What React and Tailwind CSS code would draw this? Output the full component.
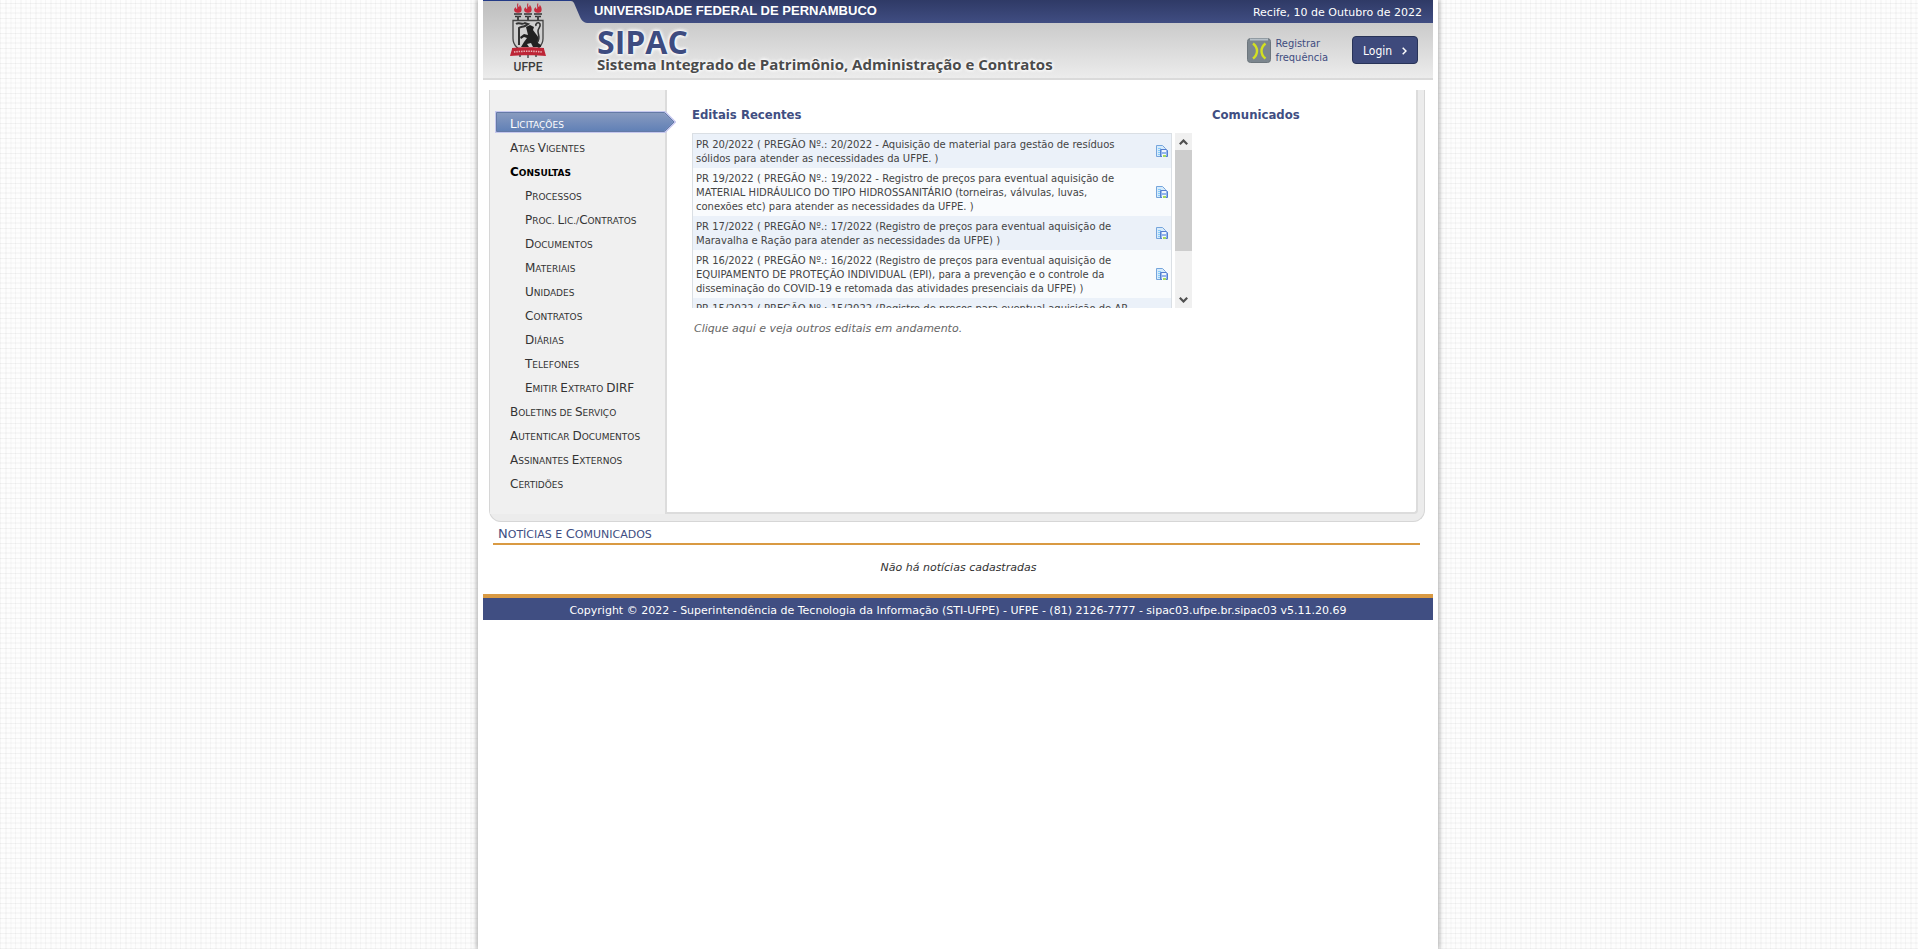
import { useRef } from "react";

const MENU = [
  { label: "Licitações", active: true },
  { label: "Atas Vigentes" },
  { label: "Consultas", heading: true },
  { label: "Processos", sub: true },
  { label: "Proc. Lic./Contratos", sub: true },
  { label: "Documentos", sub: true },
  { label: "Materiais", sub: true },
  { label: "Unidades", sub: true },
  { label: "Contratos", sub: true },
  { label: "Diárias", sub: true },
  { label: "Telefones", sub: true },
  { label: "Emitir Extrato DIRF", sub: true },
  { label: "Boletins de Serviço" },
  { label: "Autenticar Documentos" },
  { label: "Assinantes Externos" },
  { label: "Certidões" },
];

const EDITAIS = [
  ["PR 20/2022 ( PREGÃO Nº.: 20/2022 - Aquisição de material para gestão de resíduos", "sólidos para atender as necessidades da UFPE. )"],
  ["PR 19/2022 ( PREGÃO Nº.: 19/2022 - Registro de preços para eventual aquisição de", "MATERIAL HIDRÁULICO DO TIPO HIDROSSANITÁRIO (torneiras, válvulas, luvas,", "conexões etc) para atender as necessidades da UFPE. )"],
  ["PR 17/2022 ( PREGÃO Nº.: 17/2022 (Registro de preços para eventual aquisição de", "Maravalha e Ração para atender as necessidades da UFPE) )"],
  ["PR 16/2022 ( PREGÃO Nº.: 16/2022 (Registro de preços para eventual aquisição de", "EQUIPAMENTO DE PROTEÇÃO INDIVIDUAL (EPI), para a prevenção e o controle da", "disseminação do COVID-19 e retomada das atividades presenciais da UFPE) )"],
  ["PR 15/2022 ( PREGÃO Nº.: 15/2022 (Registro de preços para eventual aquisição de AR"],
];

/* Small capitals at a larger ratio than the browser's synthesized ones. */
function SmallCaps({ text, size = "text-[9px]", capSize = "text-[12px]" }) {
  return (
    <span className={`${size} whitespace-nowrap uppercase`}>
      {text.split(/([A-Z]+)/).map((part, i) => (i % 2 ? <span key={i} className={capSize}>{part}</span> : part))}
    </span>
  );
}

function Crest() {
  return (
    <svg viewBox="0 0 38 56" className="block h-14 w-[38px]" aria-hidden="true">
      {[9, 19, 29].map((x) => (
        <g key={x}>
          <path d={`M${x} 1c1 2-1 3 1 4 1-1 0-2 1-2 2 3 2 5 1 7-1 1-5 1-6 0-2-3 0-4 1-5 0 1 0 2 1 2 1-2-1-4 1-6z`} fill="#c42a3c" />
          <path d={`M${x - 4} 12h8M${x - 3} 14.500h6`} stroke="#333" strokeWidth="1.4" />
          <path d={`M${x} 14v4`} stroke="#444" strokeWidth="2" />
        </g>
      ))}
      <path d="M4 18.500h30v18c0 8-6 12-15 15-9-3-15-7-15-15z" fill="#d0d0d0" stroke="#444" strokeWidth="1.3" />
      <path d="M7 22c3-2 6 1 9-1l3 1-3 2c-3 1-5 1-6 2v17" fill="none" stroke="#333" strokeWidth="2" />
      <path d="M17 25l4-2 4 2-1 3 3 4c3 3 3 6 2 9l3 2v2h-8l-2-4-4 1 2 3h-8l3-5 3-4-3-1-3 2-1-2 4-3 4 1z" fill="#222" />
      <path d="M28 40c4-3 1-7 1-11 0-3 3-4 2-7-2-3-5 0-4 2" fill="none" stroke="#333" strokeWidth="1.6" />
      <path d="M3 46c8-1 24-1 32 0v1l2 7c-8-1-28-1-36 0l2-7z" fill="#bd2536" />
      <path d="M5 50c9-1 19-1 28 0" stroke="#eab3b7" strokeWidth="1.6" strokeDasharray="1.4 1" fill="none" />
      <path d="M11 53v2M19 53v3M27 53v2" stroke="#444" strokeWidth="1.4" />
    </svg>
  );
}

function SaveIcon() {
  return (
    <svg viewBox="0 0 12 12" className="block size-3" aria-hidden="true">
      <path d="M.5.5h6l3 3v8h-9z" fill="#d6eafb" stroke="#75a5dc" />
      <path d="M2 3.500h3M2 5.500h2M2 7.500h2M2 9.500h2" stroke="#86ccfa" />
      <path d="M4.500 4.500h6l1 1v6h-7z" fill="#93b5ec" stroke="#557fce" />
      <path d="M6 5h4v2H6z" fill="#f0f5fd" />
      <path d="M6 9h4v3H6z" fill="#f6faef" />
      <path d="M7 10h3v2H7z" fill="#a5d860" />
    </svg>
  );
}

function MenuItem({ item }) {
  if (item.active) {
    return (
      <li className="flex h-6 items-start">
        <a href="#licitacoes" className="relative -mt-px -mr-[11px] ml-[5px] flex h-[22px] w-[181px] items-center pt-1 pl-[15px] text-white">
          <svg viewBox="0 0 181 22" className="absolute inset-0 h-full w-full" aria-hidden="true">
            <defs>
              <linearGradient id="arrow" x1="0" y1="0" x2="0" y2="1">
                <stop offset="0" stopColor="#8a9cc0" />
                <stop offset="1" stopColor="#5f7fb6" />
              </linearGradient>
            </defs>
            <path d="M1 1h169l10 10-10 10H1z" fill="url(#arrow)" stroke="#c5c7ee" strokeWidth="2" />
            <path d="M1.500 1.500h168l9.500 9.500-9.500 9.500H1.500z" fill="none" stroke="#647aa6" />
          </svg>
          <span className="relative flex items-center">
            <SmallCaps text={item.label} />
          </span>
        </a>
      </li>
    );
  }
  if (item.heading) {
    return (
      <li className="flex h-6 items-center pl-5 font-bold text-black">
        <SmallCaps text={item.label} />
      </li>
    );
  }
  return (
    <li className={item.sub ? "flex h-6 items-center pl-[35px]" : "flex h-6 items-center pl-5"}>
      <a href="#menu" className="flex items-center">
        <SmallCaps text={item.label} />
      </a>
    </li>
  );
}

function Editais() {
  const list = useRef(null);
  const scroll = (dy) => list.current.scrollBy(0, dy);
  return (
    <div className="flex h-[175px] w-[500px] gap-[3px]">
      <div ref={list} className="flex-1 overflow-y-auto [scrollbar-width:none]">
        <table className="w-full border border-[#dadfe4] text-[10px] leading-[14px] text-[#444]">
          <tbody>
            {EDITAIS.map((lines, i) => (
              <tr key={i} className="odd:bg-[#ebf1f9] even:bg-[#f9fbfd]">
                <td className="whitespace-nowrap pt-1 pb-0.5 pl-[3px] align-top">
                  {lines.map((l) => (
                    <div key={l}>{l}</div>
                  ))}
                </td>
                <td className={lines.length > 1 ? "w-4 pr-[3px] align-middle" : "h-12 w-4 pr-[3px] align-middle"}>
                  <button type="button" aria-label="Baixar edital" className="block">
                    <SaveIcon />
                  </button>
                </td>
              </tr>
            ))}
          </tbody>
        </table>
      </div>
      <div className="flex w-[17px] flex-col bg-[#f0f0f0]">
        <button type="button" aria-label="Rolar para cima" onClick={() => scroll(-24)} className="flex h-[17px] items-center justify-center">
          <svg viewBox="0 0 9 6" className="h-1.5 w-[9px]"><path d="M.8 5.200L4.500 1.500l3.700 3.700" fill="none" stroke="#505050" strokeWidth="2.200" /></svg>
        </button>
        <div className="flex-1">
          <div className="h-[101px] bg-[#cdcdcd]" />
        </div>
        <button type="button" aria-label="Rolar para baixo" onClick={() => scroll(24)} className="flex h-[17px] items-center justify-center">
          <svg viewBox="0 0 9 6" className="h-1.5 w-[9px]"><path d="M.8.8L4.500 4.500L8.200.8" fill="none" stroke="#505050" strokeWidth="2.200" /></svg>
        </button>
      </div>
    </div>
  );
}

function Header() {
  return (
    <header className="flex h-20 border-b-2 border-[#dadada] bg-linear-to-b from-[#bdbdbd] to-[#ececec]">
      <div className="flex w-[88px] flex-col items-center border-t border-[#223a86] pt-px pl-0.5">
        <Crest />
        <span className="font-['Roboto',sans-serif] text-[12px] leading-[18px] font-medium text-[#3c3c3c]">UFPE</span>
      </div>
      <div className="flex min-w-0 flex-1 flex-col">
        <div className="flex h-[23px]">
          <svg viewBox="0 0 23 23" className="h-[23px] w-[23px] shrink-0" aria-hidden="true">
            <defs>
              <linearGradient id="bar" x1="0" y1="0" x2="0" y2="1">
                <stop offset="0" stopColor="#2f3a66" />
                <stop offset="1" stopColor="#404d82" />
              </linearGradient>
            </defs>
            <path d="M0 0h23v23h-5c-5 0-7-2-9-6L3 3Q2 1 0 1z" fill="url(#bar)" />
          </svg>
          <div className="flex flex-1 items-center justify-between bg-linear-to-b from-[#2f3a66] to-[#404d82] pr-[11px] text-white">
            <strong className="pb-0.5 font-['Liberation_Sans',Arial,sans-serif] text-[13px] leading-5">UNIVERSIDADE FEDERAL DE PERNAMBUCO</strong>
            <span className="pt-0.5 text-[11px] leading-5">Recife, 10 de Outubro de 2022</span>
          </div>
        </div>
        <div className="flex flex-1 justify-between pr-[15px] pl-[26px]">
          <div className="pt-1 font-['Open_Sans','Noto_Sans',sans-serif] font-bold [text-shadow:0_0_4px_#fff,0_0_4px_#fff,0_0_3px_#fff]">
            <h1 className="text-[32px] leading-[30px] text-[#3e4c80]">SIPAC</h1>
            <p className="text-[15px] leading-[14px] text-[#4b4b4b]">Sistema Integrado de Patrimônio, Administração e Contratos</p>
          </div>
          <div className="flex items-start gap-6 pt-[13px]">
            <a href="#frequencia" className="flex gap-1 font-['DejaVu_Sans_Condensed','DejaVu_Sans',sans-serif] text-[11px] leading-[14px] text-[#3e4c80]">
              <svg viewBox="0 0 24 25" className="mt-0.5 h-[25px] w-6" aria-hidden="true">
                <rect x=".5" y=".5" width="23" height="24" rx="3" fill="#7c868e" stroke="#6d767d" />
                <path d="M3 1.500h18" stroke="#b6c0c8" strokeWidth="2" />
                <path d="M6 5.500q4 3 4 7.500t-4 7.500M18.500 5.500q-4 3-4 7.500t4 7.500" fill="none" stroke="#d3e021" strokeWidth="2.400" />
              </svg>
              <span className="pt-px">Registrar<br />frequência</span>
            </a>
            <button type="button" className="flex h-7 w-[66px] items-center justify-between rounded border border-[#283358] bg-[#3e4a7c] px-2.5 pt-px font-['DejaVu_Sans_Condensed','DejaVu_Sans',sans-serif] text-[12px] text-white">
              Login
              <svg viewBox="0 0 5 8" className="h-2 w-[5px]" aria-hidden="true"><path d="M.7.7L4 4L.7 7.300" fill="none" stroke="#fff" strokeWidth="1.500" /></svg>
            </button>
          </div>
        </div>
      </div>
    </header>
  );
}

export default function App() {
  return (
    <div className="min-h-screen bg-[#fdfdfd] bg-[repeating-linear-gradient(0deg,#0000000b_0_1px,transparent_1px_5px,#00000006_5px_7px,transparent_7px_10px,#00000004_10px_12px,transparent_12px_15px),repeating-linear-gradient(90deg,#00000008_0_1px,transparent_1px_5px,#00000006_5px_7px,transparent_7px_10px,#00000004_10px_12px,transparent_12px_15px)] pr-0.5 font-['DejaVu_Sans',Verdana,sans-serif] text-[11px] text-[#333]">
      <div className="mx-auto min-h-screen max-w-[960px] bg-white px-[5px] shadow-[0_0_5px_1px_#a8a8a8]">
        <Header />
        <div className="mt-2.5 mr-2 ml-1.5 flex min-h-[432px] rounded-b-xl border-x border-b border-[#d6d6d6] bg-[#ececec] pr-1.5 pb-[7px]">
          <nav className="w-[175px] shrink-0 bg-[#f0f0f0] pt-[22px]">
            <ul>
              {MENU.map((m) => (
                <MenuItem key={m.label} item={m} />
              ))}
            </ul>
          </nav>
          <main className="flex flex-1 gap-5 rounded-br border-2 border-t-0 border-[#dcdcdc] bg-white pt-[15px] pl-[25px]">
            <section>
              <h2 className="mb-[9px] font-['DejaVu_Sans_Condensed','DejaVu_Sans',sans-serif] text-[13px] leading-[19px] font-bold text-[#404e82]">Editais Recentes</h2>
              <Editais />
              <a href="#editais" className="mt-[13px] ml-0.5 block leading-4 text-[#666] italic">Clique aqui e veja outros editais em andamento.</a>
            </section>
            <section>
              <h2 className="font-['DejaVu_Sans_Condensed','DejaVu_Sans',sans-serif] text-[13px] leading-[19px] font-bold text-[#404e82]">Comunicados</h2>
            </section>
          </main>
        </div>
        <section className="mt-px mr-[13px] ml-2.5">
          <h2 className="flex h-[22px] items-center border-b-2 border-[#d99a43] pt-px pl-[5px] text-[#404e82]">
            <SmallCaps text="Notícias e Comunicados" size="text-[11px]" capSize="text-[13px]" />
          </h2>
          <p className="pt-3.5 pb-[17px] pl-1 text-center leading-[18px] italic">Não há notícias cadastradas</p>
        </section>
        <footer className="border-t-4 border-[#d99a43] bg-[#404e82] pt-1 text-center leading-[18px] text-white">
          Copyright © 2022 - Superintendência de Tecnologia da Informação (STI-UFPE) - UFPE - (81) 2126-7777 - sipac03.ufpe.br.sipac03 v5.11.20.69
        </footer>
      </div>
    </div>
  );
}
